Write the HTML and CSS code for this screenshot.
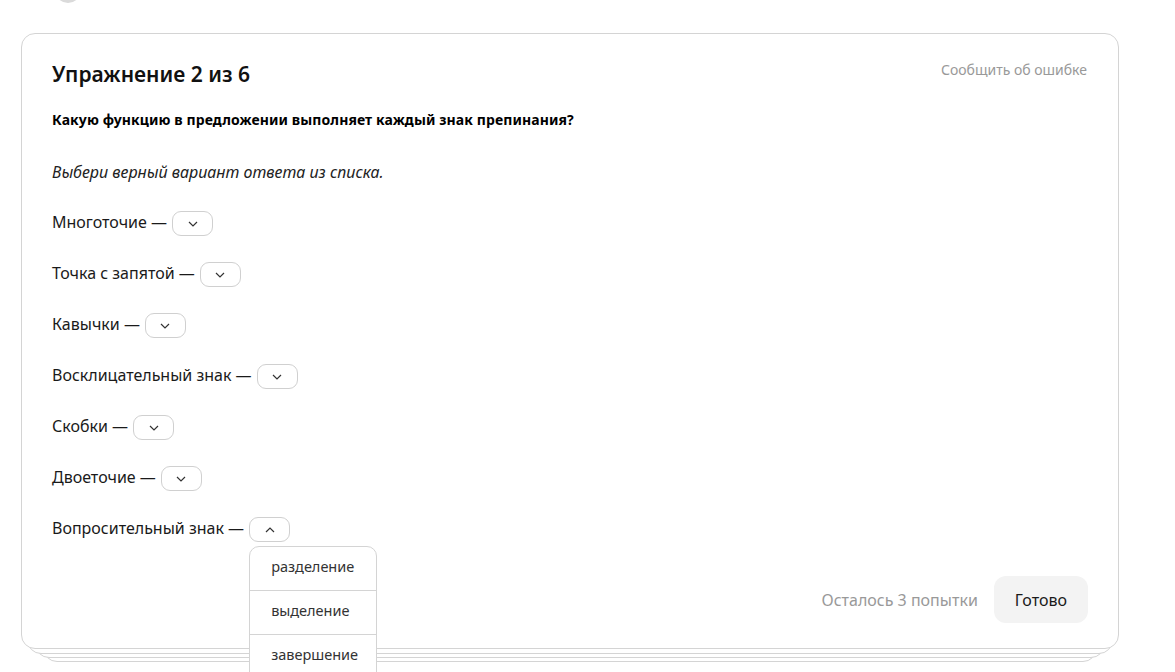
FILE: index.html
```html
<!DOCTYPE html>
<html lang="ru">
<head>
<meta charset="utf-8">
<title>Упражнение 2 из 6</title>
<link rel="stylesheet" href="styles.css">
</head>
<body>
<div class="page">
  <div class="topbar"><span class="avatar"></span></div>
  <div class="stack">
    <div class="layer layer-3"></div>
    <div class="layer layer-2"></div>
    <div class="layer layer-1"></div>
    <section class="card">
      <header class="card-head">
        <h1 class="title">Упражнение 2 из 6</h1>
        <a class="report" href="#">Сообщить об ошибке</a>
      </header>
      <p class="question">Какую функцию в предложении выполняет каждый знак препинания?</p>
      <p class="hint">Выбери верный вариант ответа из списка.</p>
      <div class="rows">
        <div class="row"><span>Многоточие —</span><button class="sel"><svg class="chev" viewBox="0 0 10 6"><path d="M1 1l4 4 4-4"/></svg></button></div>
        <div class="row"><span>Точка с запятой —</span><button class="sel"><svg class="chev" viewBox="0 0 10 6"><path d="M1 1l4 4 4-4"/></svg></button></div>
        <div class="row"><span>Кавычки —</span><button class="sel"><svg class="chev" viewBox="0 0 10 6"><path d="M1 1l4 4 4-4"/></svg></button></div>
        <div class="row"><span>Восклицательный знак —</span><button class="sel"><svg class="chev" viewBox="0 0 10 6"><path d="M1 1l4 4 4-4"/></svg></button></div>
        <div class="row"><span>Скобки —</span><button class="sel"><svg class="chev" viewBox="0 0 10 6"><path d="M1 1l4 4 4-4"/></svg></button></div>
        <div class="row"><span>Двоеточие —</span><button class="sel"><svg class="chev" viewBox="0 0 10 6"><path d="M1 1l4 4 4-4"/></svg></button></div>
        <div class="row"><span>Вопросительный знак —</span>
          <div class="sel-wrap">
            <button class="sel open"><svg class="chev" viewBox="0 0 10 6"><path d="M1 5l4-4 4 4"/></svg></button>
            <ul class="menu">
              <li>разделение</li>
              <li>выделение</li>
              <li>завершение</li>
            </ul>
          </div>
        </div>
      </div>
      <footer class="card-foot">
        <span class="attempts">Осталось 3 попытки</span>
        <button class="done">Готово</button>
      </footer>
    </section>
  </div>
</div>
</body>
</html>
```

FILE: styles.css
```css
* { box-sizing: border-box; }
html, body { margin: 0; padding: 0; background: #fff; }
body {
  font-family: "Source Sans Pro", "Noto Sans", sans-serif;
  color: #1a1a1a;
  overflow: hidden;
  height: 672px;
}
.page { padding: 0 56px 0 21px; }
.topbar { display: flex; height: 33px; padding-left: 34px; }
.avatar {
  display: block;
  width: 26px; height: 26px;
  margin-top: -23px;
  border-radius: 50%;
  background: #dadada;
}
.stack { position: relative; }
.layer {
  position: absolute;
  border: 1px solid #d4d4d4;
  border-radius: 14px;
  background: #fff;
  top: 0;
}
.layer-1 { left: 6px; right: 6px; bottom: -5px; }
.layer-2 { left: 14px; right: 14px; bottom: -9px; }
.layer-3 { left: 22px; right: 22px; bottom: -13px; }
.card {
  position: relative;
  border: 1px solid #d4d4d4;
  border-radius: 14px;
  background: #fff;
  padding: 26px 31px 24px 30px;
  height: 616px;
}
.card-head { display: flex; justify-content: space-between; align-items: flex-start; }
.title {
  margin: 0;
  font-size: 21px;
  line-height: 28px;
  font-weight: 600;
  color: #111;
}
.report {
  font-size: 14px;
  line-height: 20px;
  color: #999;
  text-decoration: none;
}
.question {
  margin: 22px 0 0;
  font-size: 14px;
  line-height: 20px;
  font-weight: 700;
  letter-spacing: 0.1px;
  color: #000;
}
.hint {
  margin: 30px 0 0;
  font-size: 16px;
  line-height: 24px;
  font-style: italic;
  color: #222;
}
.rows { margin-top: 21px; display: flex; flex-direction: column; gap: 17px; }
.row {
  display: flex;
  align-items: center;
  gap: 5px;
  height: 34px;
  font-size: 16px;
  color: #1a1a1a;
}
.sel {
  width: 41px; height: 25px;
  border: 1px solid #d0d0d0;
  border-radius: 9px;
  background: #fff;
  padding: 0;
  display: flex;
  align-items: center;
  justify-content: center;
  margin-top: 3px;
}
.chev { width: 10px; height: 6px; fill: none; stroke: #333; stroke-width: 1.2; }
.sel-wrap { position: relative; display: flex; }
.menu {
  position: absolute;
  top: 32px; left: 0;
  width: 128px;
  margin: 0; padding: 0;
  list-style: none;
  background: #fff;
  border: 1px solid #d4d4d4;
  border-radius: 10px 10px 0 0;
  z-index: 5;
}
.menu li {
  height: 44px;
  display: flex;
  align-items: center;
  padding: 0 0 5px 21px;
  font-size: 14.5px;
  color: #333;
  border-top: 1px solid #d4d4d4;
}
.menu li:first-child { border-top: 0; height: 43px; }
.card-foot {
  position: absolute;
  right: 30px; bottom: 25px;
  display: flex;
  align-items: center;
  gap: 16px;
}
.attempts { font-size: 16px; color: #999; }
.done {
  height: 47px;
  padding: 0 21px;
  border: 0;
  border-radius: 12px;
  background: #f3f3f3;
  font-family: inherit;
  font-size: 16px;
  color: #1a1a1a;
}
```
